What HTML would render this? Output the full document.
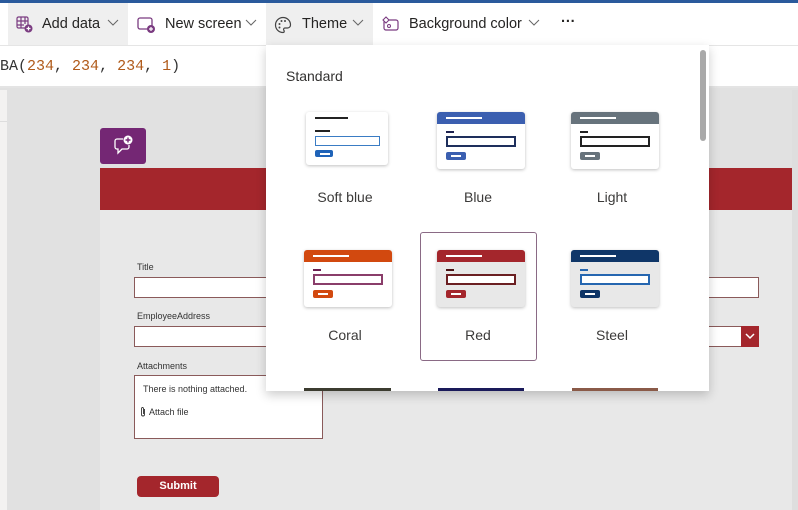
<!DOCTYPE html>
<html><head><meta charset="utf-8"><style>
*{margin:0;padding:0;box-sizing:border-box}
body{width:798px;height:510px;overflow:hidden;position:relative;background:#e1e1e1;font-family:"Liberation Sans",sans-serif}
.a{position:absolute}
.tb{font-size:14.5px;color:#252423}
.t{position:absolute;width:88px;height:57px;background:#fff;border-radius:3px;box-shadow:0 1px 3px rgba(0,0,0,.25);overflow:hidden}
.t .h{position:absolute;left:0;top:0;width:88px;height:12px}
.t .l{position:absolute;left:9px;top:5px;width:36px;height:2px;background:#fff}
.t .s{position:absolute;left:9px;top:19px;width:8px;height:2px}
.t .i{position:absolute;left:9px;top:24px;width:70px;height:11px;border:2px solid}
.t .b{position:absolute;left:9px;top:40px;width:20px;height:8px;border-radius:2px}
.t .b:after{content:"";position:absolute;left:5px;top:3px;width:10px;height:2px;background:#fff}
.lab{position:absolute;font-size:14px;color:#3b3a39;text-align:center;width:120px}
.fl{position:absolute;font-size:9px;color:#333}
.in{position:absolute;background:#fff;border:1px solid #8a5a5a}
</style></head><body>
<div class="a" style="left:0;top:0;width:798px;height:3px;background:#2a5a9c"></div>
<div class="a" style="left:0;top:3px;width:798px;height:43px;background:#fff;border-bottom:1px solid #e5e5e5"></div>
<div class="a" style="left:8px;top:3px;width:120px;height:42px;background:#efefef"></div>
<div class="a" style="left:266px;top:3px;width:107px;height:42px;background:#efefef"></div>
<svg class="a" style="left:16px;top:16px" width="18" height="18" viewBox="0 0 18 18"><g fill="none" stroke="#7a3b80" stroke-width="1.2"><rect x="1" y="1" width="11" height="11" rx="1.5"/><path d="M1 5h11M1 9h7M5 1v11M9 1v7"/></g><circle cx="12.5" cy="12.5" r="4" fill="#7a3b80"/><path d="M12.5 10.5v4M10.5 12.5h4" stroke="#fff" stroke-width="1.2"/></svg>
<div class="a tb" style="left:42px;top:16px">Add data</div>
<svg class="a" style="left:107px;top:19px" width="12" height="8"><path d="M1 1l5 5 5-5" fill="none" stroke="#666" stroke-width="1"/></svg>
<svg class="a" style="left:137px;top:16px" width="19" height="18" viewBox="0 0 19 18"><rect x="1" y="2" width="14" height="11" rx="2" fill="none" stroke="#7a3b80" stroke-width="1.3"/><circle cx="14" cy="13" r="4" fill="#7a3b80"/><path d="M14 11v4M12 13h4" stroke="#fff" stroke-width="1.2"/></svg>
<div class="a tb" style="left:165px;top:16px">New screen</div>
<svg class="a" style="left:245px;top:19px" width="12" height="8"><path d="M1 1l5 5 5-5" fill="none" stroke="#666" stroke-width="1"/></svg>
<svg class="a" style="left:274px;top:16px" width="18" height="18" viewBox="0 0 18 18"><path d="M9 1.5a7.5 7.5 0 1 0 0 15c1.5 0 1.5-1.5.8-2.3-.7-.9 0-2.2 1.2-2.2h2.5a3 3 0 0 0 3-3C16.5 4.5 13 1.5 9 1.5z" fill="none" stroke="#444" stroke-width="1.2"/><circle cx="5.5" cy="8" r="1" fill="#444"/><circle cx="7.5" cy="5" r="1" fill="#444"/><circle cx="11" cy="5" r="1" fill="#444"/><circle cx="5.5" cy="11.5" r="1" fill="#444"/></svg>
<div class="a tb" style="left:302px;top:16px">Theme</div>
<svg class="a" style="left:352px;top:19px" width="12" height="8"><path d="M1 1l5 5 5-5" fill="none" stroke="#666" stroke-width="1"/></svg>
<svg class="a" style="left:382px;top:16px" width="18" height="16" viewBox="0 0 18 16"><rect x="2" y="4" width="14" height="10" rx="2" fill="none" stroke="#7a3b80" stroke-width="1.2"/><path d="M4 1l3 3-3 3-3-3z" fill="#fff" stroke="#7a3b80" stroke-width="1.1"/><circle cx="7" cy="10" r="1.5" fill="none" stroke="#7a3b80"/></svg>
<div class="a tb" style="left:409px;top:16px">Background color</div>
<svg class="a" style="left:528px;top:19px" width="12" height="8"><path d="M1 1l5 5 5-5" fill="none" stroke="#666" stroke-width="1"/></svg>
<div class="a tb" style="left:561px;top:14px;font-weight:bold">···</div>
<div class="a" style="left:0;top:46px;width:798px;height:42px;background:#fff;border-bottom:2px solid #e4e4e4"></div>
<div class="a" style="left:0;top:58px;font-family:'Liberation Mono',monospace;font-size:15px;color:#333">BA(<span style="color:#b05a1a">234</span>, <span style="color:#b05a1a">234</span>, <span style="color:#b05a1a">234</span>, <span style="color:#b05a1a">1</span>)</div>
<div class="a" style="left:0;top:90px;width:7px;height:420px;background:#f3f2f1"></div>
<div class="a" style="left:0;top:121px;width:7px;height:1px;background:#ddd"></div>
<div class="a" style="left:100px;top:168px;width:692px;height:342px;background:#e8e8e8"></div>
<div class="a" style="left:100px;top:168px;width:692px;height:42px;background:#a4262c"></div>
<div class="a" style="left:792px;top:90px;width:6px;height:420px;background:#dedede"></div>
<div class="a" style="left:100px;top:128px;width:46px;height:36px;background:#742774;border-radius:3px"></div>
<svg class="a" style="left:113px;top:134px" width="22" height="22" viewBox="0 0 22 22"><path d="M10 5H4a2 2 0 0 0-2 2v6a2 2 0 0 0 2 2h1v4l4-4h5a2 2 0 0 0 2-2v-2" fill="none" stroke="#fff" stroke-width="1.3"/><circle cx="15" cy="6" r="4.5" fill="#fff"/><path d="M15 3.5v5M12.5 6h5" stroke="#742774" stroke-width="1.4"/></svg>
<div class="fl" style="left:137px;top:262px">Title</div>
<div class="in" style="left:134px;top:277px;width:625px;height:21px"></div>
<div class="fl" style="left:137px;top:311px">EmployeeAddress</div>
<div class="in" style="left:134px;top:326px;width:625px;height:21px"></div>
<div class="a" style="left:741px;top:326px;width:18px;height:21px;background:#a4262c"></div>
<svg class="a" style="left:745px;top:333px" width="10" height="7"><path d="M1 1l4 4 4-4" fill="none" stroke="#fff" stroke-width="1.5"/></svg>
<div class="fl" style="left:137px;top:361px">Attachments</div>
<div class="in" style="left:134px;top:375px;width:189px;height:64px"></div>
<div class="fl" style="left:143px;top:384px">There is nothing attached.</div>
<svg class="a" style="left:140px;top:406px" width="6" height="11" viewBox="0 0 6 11"><path d="M4.5 3v5.5a1.5 1.5 0 0 1-3 0V2.5a1 1 0 0 1 2 0V8" fill="none" stroke="#333" stroke-width="0.9"/></svg>
<div class="fl" style="left:149px;top:407px">Attach file</div>
<div class="a" style="left:137px;top:476px;width:82px;height:21px;background:#a4262c;border-radius:4px;color:#fff;font-size:11px;font-weight:bold;text-align:center;line-height:21px">Submit</div>
<div class="a" style="left:266px;top:45px;width:443px;height:346px;background:#fff;box-shadow:0 4px 10px rgba(0,0,0,.2)"></div>
<div class="a" style="left:700px;top:50px;width:6px;height:91px;background:#a9a9a9;border-radius:3px"></div>
<div class="a" style="left:286px;top:68px;font-size:14px;color:#323130">Standard</div>
<div class="a" style="left:420px;top:232px;width:117px;height:129px;border:1px solid #8a6a85;border-radius:3px"></div>

<div class="t" style="left:306px;top:112px;width:82px;height:53px"><div class="l" style="background:#222;top:5px;width:33px"></div><div class="s" style="background:#222;top:18px;width:15px;height:2px"></div><div class="i" style="border:1px solid #3a7cc4;top:24px;width:65px;height:10px"></div><div class="b" style="background:#1f63b8;width:18px;top:38px;height:7px"></div></div>
<div class="t" style="left:437px;top:112px"><div class="h" style="background:#3b5fb0"></div><div class="l"></div><div class="s" style="background:#1e2350"></div><div class="i" style="border-color:#1e2f5c"></div><div class="b" style="background:#3b5fb0"></div></div>
<div class="t" style="left:571px;top:112px"><div class="h" style="background:#67737c"></div><div class="l"></div><div class="s" style="background:#222"></div><div class="i" style="border-color:#222"></div><div class="b" style="background:#67737c"></div></div>

<div class="t" style="left:304px;top:250px"><div class="h" style="background:#d2490f"></div><div class="l"></div><div class="s" style="background:#6b1f50"></div><div class="i" style="border-color:#8a3d6a"></div><div class="b" style="background:#d2490f"></div></div>
<div class="t" style="left:437px;top:250px;background:#e8e8e8"><div class="h" style="background:#a4262c"></div><div class="l"></div><div class="s" style="background:#4a0f12"></div><div class="i" style="border-color:#6b1f22;background:#fff"></div><div class="b" style="background:#a4262c"></div></div>
<div class="t" style="left:571px;top:250px;background:#e8e8e8"><div class="h" style="background:#0f3668"></div><div class="l"></div><div class="s" style="background:#2566b0"></div><div class="i" style="border-color:#2566b0;background:#fff"></div><div class="b" style="background:#0f3668"></div></div>

<div class="lab" style="left:285px;top:189px">Soft blue</div>
<div class="lab" style="left:418px;top:189px">Blue</div>
<div class="lab" style="left:552px;top:189px">Light</div>
<div class="lab" style="left:285px;top:327px">Coral</div>
<div class="lab" style="left:418px;top:327px">Red</div>
<div class="lab" style="left:552px;top:327px">Steel</div>

<div class="a" style="left:304px;top:388px;width:87px;height:3px;background:#3c3c30"></div>
<div class="a" style="left:438px;top:388px;width:86px;height:3px;background:#1a1a5a"></div>
<div class="a" style="left:572px;top:388px;width:86px;height:3px;background:#8a5a48"></div>
</body></html>
